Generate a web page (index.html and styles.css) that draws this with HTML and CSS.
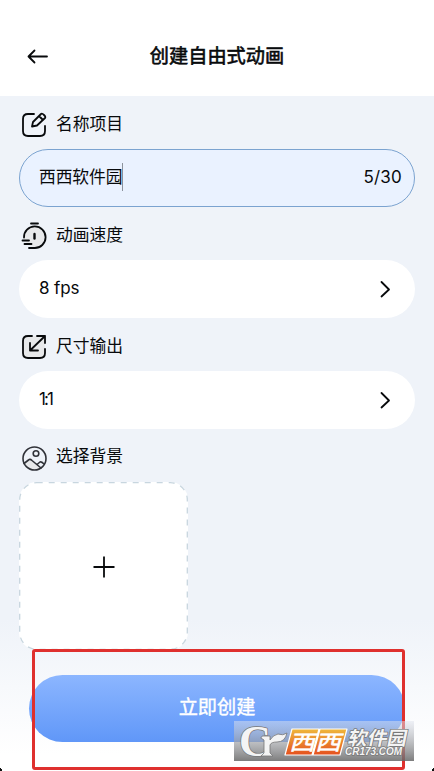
FILE: index.html
```
<!DOCTYPE html>
<html lang="zh-CN">
<head>
<meta charset="utf-8">
<title>创建自由式动画</title>
<link rel="stylesheet" href="styles.css">
</head>
<body>
<div class="screen">
  <header class="header">
    <svg class="back" width="22" height="16" viewBox="0 0 22 16"><path d="M7.500 2.500L1.500 8.500L7.500 14.500M1.500 8.500H20"/></svg>
    <h1 class="title">创建自由式动画</h1>
  </header>
  <main class="form">
    <div class="label">
      <svg class="icon" width="28" height="28" viewBox="0 0 28 28"><path d="M14 3H8Q3 3 3 8V20Q3 25 8 25H20Q25 25 25 20V15"/><path d="M12 15.500L13 11L21 3Q22 2 24 4Q26 6 25 7L17 14.500ZM19 5L23 9"/></svg>
      <span>名称项目</span>
    </div>
    <div class="field active"><span class="entry">西西软件园</span><span class="count">5/30</span></div>
    <div class="label">
      <svg class="icon" width="28" height="28" viewBox="0 0 28 28"><circle class="soft" cx="14.500" cy="15" r="10"/><path d="M4 15.500A10.800 10.800 0 1 1 14.500 26H9M11 1.500H18M2.500 18.500H9M4.500 22H11.500"/><path class="heavy" d="M14.500 12V16.500"/></svg>
      <span>动画速度</span>
    </div>
    <div class="field"><span class="fps">8 fps</span><svg class="chevron" width="12" height="18" viewBox="0 0 12 18"><path d="M2.500 2L10 9.500L2.500 16.500"/></svg></div>
    <div class="label">
      <svg class="icon" width="28" height="28" viewBox="0 0 28 28"><rect class="soft" x="3" y="3" width="22" height="22" rx="4"/><path d="M12 3H8Q3 3 3 8V20Q3 25 8 25H20Q25 25 25 20V16M17 3H25V10M25 3L10 17.500M10 10V17.500H18"/></svg>
      <span>尺寸输出</span>
    </div>
    <div class="field"><span class="ratio">1:1</span><svg class="chevron" width="12" height="18" viewBox="0 0 12 18"><path d="M2.500 2L10 9.500L2.500 16.500"/></svg></div>
    <div class="label">
      <svg class="icon photo" width="28" height="28" viewBox="0 0 28 28"><path class="soft" d="M4 19L10 14L21 24Q12 29 4 19Z"/><circle cx="14.500" cy="14.500" r="11.500"/><circle cx="16" cy="9.500" r="2.800"/><path d="M4 19.500L8.500 16Q10 14.500 12 16.500L21 24M17 20.500L20 18Q21.500 17.500 24 20"/></svg>
      <span>选择背景</span>
    </div>
    <div class="picker">
      <svg class="outline" width="169" height="168" viewBox="0 0 169 168"><rect x=".7" y=".7" width="167.600" height="166.600" rx="17"/></svg>
      <svg class="plus" width="22" height="22" viewBox="0 0 22 22"><path d="M11 .5V21.500M.5 11H21.500"/></svg>
    </div>
  </main>
  <footer class="footer"><div class="button">立即创建</div></footer>
  <div class="highlight"></div>
  <svg class="watermark" width="180" height="40" viewBox="0 0 180 40">
    <defs>
      <linearGradient id="shade" x2="0" y2="1"><stop stop-color="#e0e4ee" stop-opacity=".5"/><stop offset="1" stop-color="#666" stop-opacity=".85"/></linearGradient>
      <linearGradient id="orange" x2="0" y2="1"><stop stop-color="#efb83c"/><stop offset="1" stop-color="#e5501e"/></linearGradient>
    </defs>
    <rect width="180" height="40" fill="url(#shade)"/>
    <text class="mark-c" x="5" y="35" textLength="32" lengthAdjust="spacingAndGlyphs">C</text>
    <path class="mark-r" d="M29 15H36V19Q39 14 44 13Q49 15 53 12Q51 21 43 21Q37 21 36 24V32L39 35H27L30 32V19L27 17Z"/>
    <path class="tile" d="M58 8H85L78 34H51ZM86 8H113L106 34H79Z"/>
    <g transform="translate(55 29) skewX(-15)"><text class="mark-west" x="0" y="0" textLength="52" lengthAdjust="spacingAndGlyphs">西西</text></g>
    <g transform="translate(113 23.500) skewX(-12)"><text class="mark-name" x="0" y="0" textLength="59" lengthAdjust="spacingAndGlyphs">软件园</text></g>
    <text class="mark-url" x="111" y="34" textLength="57" lengthAdjust="spacingAndGlyphs">CR173.COM</text>
  </svg>
  <svg class="corners" width="434" height="3" viewBox="0 0 434 3"><path d="M0 0H1V1H2V3H0ZM434 0H433V1H432V3H434Z"/></svg>
</div>
</body>
</html>
```
FILE: styles.css
```
* { box-sizing: border-box; }
body { margin: 0; }
.screen {
  position: relative;
  width: 434px;
  height: 771px;
  overflow: hidden;
  display: flex;
  flex-direction: column;
  background: linear-gradient(#eff3f9 0, #eff3f9 620px, #fff 755px);
  font-family: "Noto Sans CJK SC", sans-serif;
  font-size: 16.8px;
  color: #080a0c;
}
svg { flex: none; fill: none; stroke: #080a0c; stroke-width: 1.8; stroke-linecap: round; stroke-linejoin: round; }
.header { height: 96px; padding: 15px 27px 0; display: grid; grid-template-columns: 22px 1fr 22px; align-items: center; background: #fff; }
.title { margin: -2px 0 0; text-align: center; font-size: 19.2px; line-height: 28px; font-weight: 400; -webkit-text-stroke: .6px #080a0c; }
.form { padding: 0 19px; }
.label { height: 53px; padding: 4px 0 0 1px; display: flex; align-items: center; gap: 8px; line-height: 24px; }
.label span { margin-top: -4px; }
.icon .soft { fill: #e7e8ea; stroke: none; }
.icon .heavy { stroke-width: 2.4; }
.photo { stroke: #303238; stroke-width: 1.6; }
.photo + span { margin-top: -5px; }
.field { height: 58px; padding: 0 24px 3px 20px; border-radius: 29px; background: #fff; display: flex; align-items: center; justify-content: space-between; }
.active { border: 1.500px solid #7ba3d0; background: #eaf2ff; padding: 0 12px 2px 19px; }
.entry { height: 28px; line-height: 26px; border-right: 1px solid #8c929c; letter-spacing: -.1px; }
.count, .fps, .ratio { font-family: Inter, sans-serif; font-size: 17px; }
.count { letter-spacing: .2px; }
.fps { letter-spacing: -.1px; }
.ratio { letter-spacing: -1.9px; }
.chevron { margin-top: 3px; }
.picker { position: relative; width: 169px; height: 168px; padding-top: 1px; border-radius: 18px; background: #fff; display: grid; place-items: center; }
.outline { position: absolute; inset: 0; stroke: #c8d6df; stroke-width: 1.3; stroke-dasharray: 6 6; stroke-linecap: butt; }
.plus { stroke-linecap: butt; }
.footer { padding: 25px 29px 0; }
.button { height: 67px; border-radius: 34px; background: linear-gradient(#8cb6ff, #6097f8); color: #fff; display: grid; place-items: center; padding-bottom: 6px; font-size: 19.2px; -webkit-text-stroke: .4px #fff; }
.highlight { position: absolute; left: 32px; top: 649px; width: 373px; height: 121px; border: 3px solid #df302e; border-radius: 3px; }
.watermark { position: absolute; left: 234px; top: 721px; stroke: none; overflow: visible; }
.watermark text { paint-order: stroke; stroke: #777; stroke-width: 1.5px; fill: #f4f4f4; }
.watermark .mark-c { font: 700 44px/1 "Liberation Serif", serif; }
.mark-r { fill: #f4f4f4; stroke: #777; stroke-width: .8; }
.tile { fill: url(#orange); stroke: #fff; stroke-width: 1.2; }
.watermark .mark-west { font: 400 21px "Noto Sans CJK SC", sans-serif; stroke: #fff; stroke-width: .5px; fill: #fff; }
.mark-name { font: 700 19px "Noto Sans CJK SC", sans-serif; }
.mark-url { font: italic 700 10px "Liberation Sans", sans-serif; }
.corners { position: absolute; left: 0; bottom: 0; fill: #111; stroke: none; }
```
